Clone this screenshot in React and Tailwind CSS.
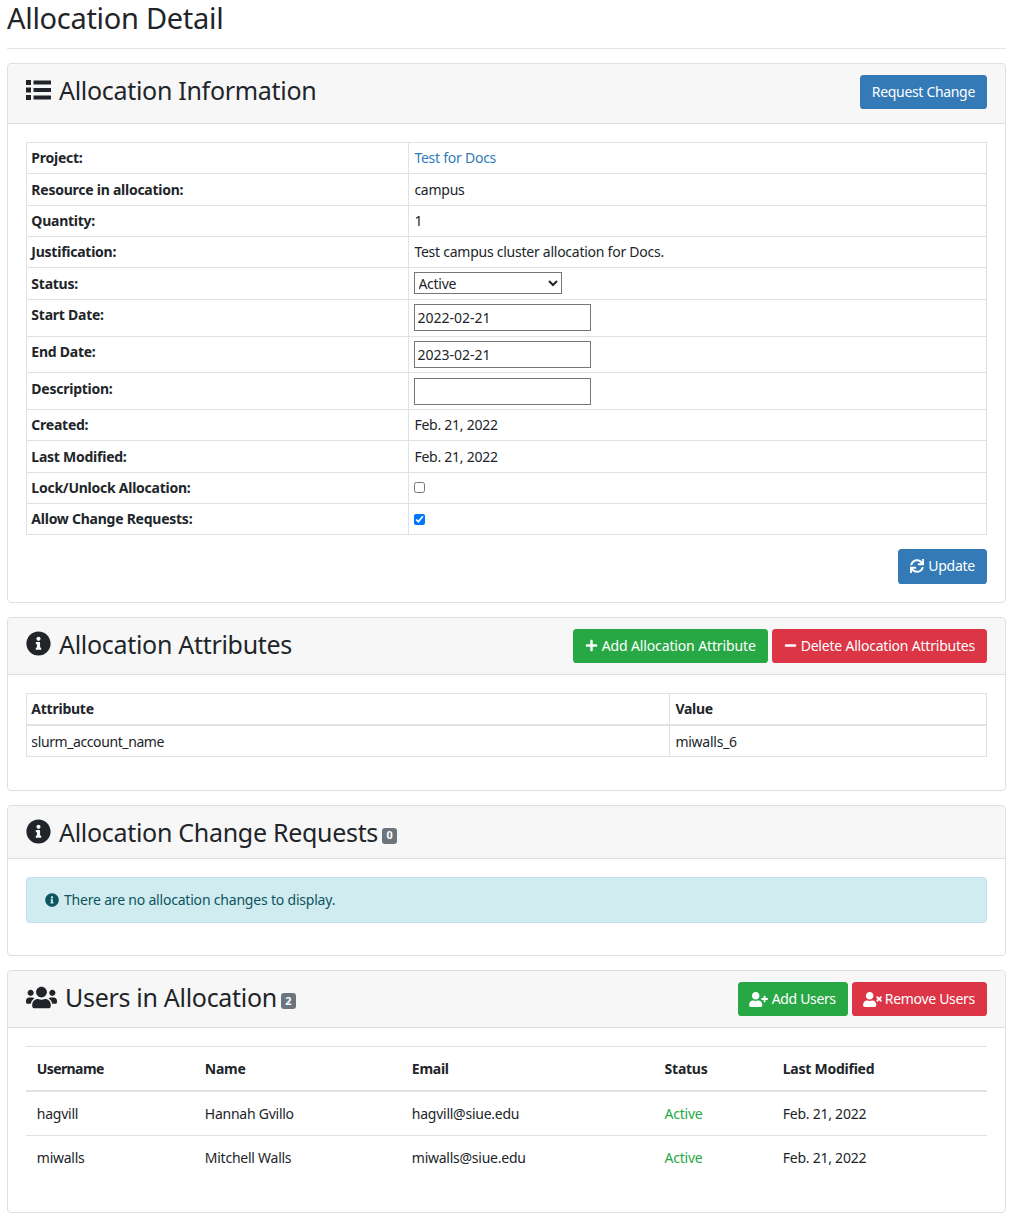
import React from 'react';
import { FaInfoCircle, FaUsers, FaUserPlus, FaUserTimes, FaPlus, FaMinus, FaSync } from 'react-icons/fa';

const Btn = ({ color, children }) => (
  <button className={`h-[34px] px-3 rounded-[3.6px] text-white flex items-center whitespace-nowrap ${color}`}>
    {children}
  </button>
);

const Card = ({ height, header, children }) => (
  <section className="border border-[#dfdfdf] rounded-[4px] bg-white">
    <div className={`bg-[#f7f7f7] border-b border-[#dfdfdf] px-[18px] pt-[11px] flex items-start justify-between rounded-t-[4px] ${height}`}>
      {header}
    </div>
    <div className="p-[18px]">{children}</div>
  </section>
);

const Title = ({ icon, children, badge }) => (
  <h3 className="flex items-center text-[25px] leading-[30px] tracking-[-0.3px] font-normal">
    {icon}
    <span>{children}</span>
    {badge && (
      <span className="ml-[4px] mt-[8px] w-[15px] h-[16px] rounded-[3px] bg-[#6c757d] text-white text-[10.8px] tracking-normal font-bold flex items-center justify-center leading-none">
        {badge}
      </span>
    )}
  </h3>
);

// fa-list, drawn heavier than the react-icons one
const ListIcon = () => (
  <svg viewBox="0 0 25 20" className="w-[25px] h-[20px] mr-[8px]" fill="currentColor">
    <rect x="0" y="0" width="5" height="5" />
    <rect x="0" y="7.5" width="5" height="5" />
    <rect x="0" y="15" width="5" height="5" />
    <rect x="7.5" y="0.5" width="17.5" height="4" />
    <rect x="7.5" y="8" width="17.5" height="4" />
    <rect x="7.5" y="15.5" width="17.5" height="4" />
  </svg>
);

const field = 'block w-[177px] h-[27px] border border-[#767676] pl-[2px] tracking-normal';

const infoRows = [
  { label: 'Project:', value: <a className="text-[#337ab7]">Test for Docs</a> },
  { label: 'Resource in allocation:', value: 'campus' },
  { label: 'Quantity:', value: '1' },
  { label: 'Justification:', value: 'Test campus cluster allocation for Docs.' },
  {
    label: 'Status:',
    value: (
      <select defaultValue="Active" className="block w-[148px] h-[22px] -mt-[1px] mb-[1px] -indent-[1px] border border-[#767676] bg-white">
        <option>Active</option>
      </select>
    ),
  },
  { label: 'Start Date:', value: <input defaultValue="2022-02-21" className={field} /> },
  { label: 'End Date:', value: <input defaultValue="2023-02-21" className={field} /> },
  { label: 'Description:', value: <input className={field} /> },
  { label: 'Created:', value: 'Feb. 21, 2022' },
  { label: 'Last Modified:', value: 'Feb. 21, 2022' },
  { label: 'Lock/Unlock Allocation:', value: <input type="checkbox" className="block w-[11px] h-[11px] m-0" />, middle: true },
  { label: 'Allow Change Requests:', value: <input type="checkbox" defaultChecked className="block w-[11px] h-[11px] m-0" />, middle: true },
];

const users = [
  ['hagvill', 'Hannah Gvillo', 'hagvill@siue.edu'],
  ['miwalls', 'Mitchell Walls', 'miwalls@siue.edu'],
];

const cell = 'border border-[#dee2e6] p-[4.37px] text-left';
const attrCell = 'border border-[#dee2e6] pl-[4.37px] pr-[4.37px] pt-[4.6px] pb-[4.14px] text-left';
const userCell = 'px-[10.8px] py-[10.6px]';

export default function App() {
  return (
    <div className="pl-[7px] pr-[6px] text-[14px] leading-[21.6px] tracking-[-0.25px] text-[#212529] bg-white font-['Noto_Sans',sans-serif]">
      <h1 className="text-[29px] leading-[36px] tracking-[-0.3px] pb-[12px] border-b border-[#e5e5e5] mb-[14px]">Allocation Detail</h1>

      <div className="flex flex-col gap-[14px]">
        {/* Info card */}
        <Card
          height="h-[60px]"
          header={
            <>
              <Title icon={<ListIcon />}>Allocation Information</Title>
              <Btn color="bg-[#337ab7] tracking-[-0.32px]">Request Change</Btn>
            </>
          }
        >
          <table className="w-full border-collapse mb-[13.4px]">
            <tbody>
              {infoRows.map(row => (
                <tr key={row.label}>
                  <th className={`${cell} w-[382px] font-bold align-top`}>{row.label}</th>
                  <td className={`${cell} !pl-[5.4px] font-normal ${row.middle ? 'align-middle' : 'align-top'}`}>{row.value}</td>
                </tr>
              ))}
            </tbody>
          </table>
          <div className="flex justify-end">
            <Btn color="bg-[#337ab7] !h-[35px]"><FaSync className="w-[14px] h-[14px] mr-[4px]" />Update</Btn>
          </div>
        </Card>

        {/* Attributes */}
        <Card
          height="h-[57px]"
          header={
            <>
              <Title icon={<FaInfoCircle className="w-[25px] h-[25px] mr-[8px]" />}>Allocation Attributes</Title>
              <div className="flex gap-[4px]">
                <Btn color="bg-[#28a745] tracking-[-0.13px]"><FaPlus className="w-[13px] h-[13px] mr-[4px]" />Add Allocation Attribute</Btn>
                <Btn color="bg-[#dc3545] tracking-[-0.21px]"><FaMinus className="w-[13px] h-[13px] mr-[4px]" />Delete Allocation Attributes</Btn>
              </div>
            </>
          }
        >
          <table className="w-full border-collapse mb-[14.4px]">
            <thead>
              <tr>
                <th className={`${attrCell} w-[643px] border-b-2`}>Attribute</th>
                <th className={`${attrCell} !pl-[5.4px] border-b-2`}>Value</th>
              </tr>
            </thead>
            <tbody>
              <tr>
                <td className={`${attrCell} tracking-[-0.4px]`}>slurm_account_name</td>
                <td className={`${attrCell} !pl-[5.4px]`}>miwalls_6</td>
              </tr>
            </tbody>
          </table>
        </Card>

        {/* Change requests */}
        <Card
          height="h-[53px]"
          header={<Title badge="0" icon={<FaInfoCircle className="w-[25px] h-[25px] mr-[8px]" />}>Allocation Change Requests</Title>}
        >
          <div className="h-[46px] mb-[14.4px] px-[18px] flex items-center rounded-[3.6px] border border-[#bee5eb] bg-[#d1ecf1] text-[#0c5460] tracking-[-0.2px]">
            <FaInfoCircle className="w-[14px] h-[14px] mr-[5px]" />
            There are no allocation changes to display.
          </div>
        </Card>

        {/* Users */}
        <Card
          height="h-[57px]"
          header={
            <>
              <Title badge="2" icon={<FaUsers className="w-[31px] h-[25px] mr-[8px]" />}>Users in Allocation</Title>
              <div className="flex gap-[4px]">
                <Btn color="bg-[#28a745] !pl-[11px] tracking-[-0.35px]"><FaUserPlus className="w-[19px] h-[15px] mr-[4px]" />Add Users</Btn>
                <Btn color="bg-[#dc3545] !pl-[11px] tracking-[-0.3px]"><FaUserTimes className="w-[19px] h-[15px] mr-[3px]" />Remove Users</Btn>
              </div>
            </>
          }
        >
          <table className="w-full table-fixed border-collapse mb-[15px]">
            <thead>
              <tr className="border-t border-[#dee2e6] border-b-2 text-left">
                <th className="w-[168px] p-[10.8px] tracking-[-0.6px]">Username</th>
                <th className="w-[207px] p-[10.8px]">Name</th>
                <th className="w-[252px] p-[10.8px]">Email</th>
                <th className="w-[119px] p-[10.8px] pl-[11.6px]">Status</th>
                <th className="p-[10.8px]">Last Modified</th>
              </tr>
            </thead>
            <tbody>
              {users.map(([username, name, email], i) => (
                <tr key={username} className={i === 0 ? 'border-b border-[#dee2e6]' : ''}>
                  <td className={userCell}>{username}</td>
                  <td className={userCell}>{name}</td>
                  <td className={userCell}>{email}</td>
                  <td className={`${userCell} pl-[11.6px] text-[#28a745]`}>Active</td>
                  <td className={userCell}>Feb. 21, 2022</td>
                </tr>
              ))}
            </tbody>
          </table>
        </Card>
      </div>
    </div>
  );
}
